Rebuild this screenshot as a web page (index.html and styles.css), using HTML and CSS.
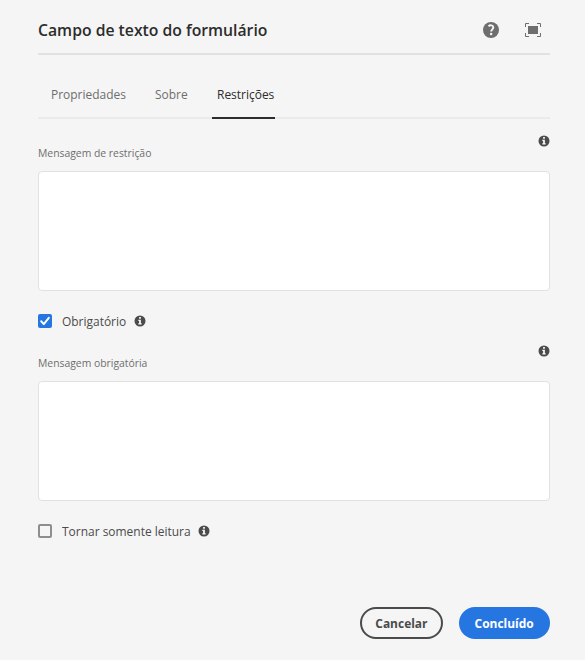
FILE: index.html
```html
<!DOCTYPE html>
<html lang="pt-BR">
<head>
<meta charset="utf-8">
<title>Campo de texto do formulário</title>
<link rel="stylesheet" href="styles.css">
</head>
<body>
<svg class="defs" width="0" height="0" aria-hidden="true">
  <symbol id="info" viewBox="0 0 12 12">
    <circle cx="6" cy="6" r="5.5" fill="#4b4b4b"/>
    <path d="M5.1 2.1h1.8v1.6H5.1zM4.3 4.8h2.6v3.5h.8v1.1H4.3V8.3h.8V5.9h-.8z" fill="#f5f5f5"/>
  </symbol>
</svg>
<main class="dialog">
  <header class="header">
    <h1 class="title"><span class="narrow">Campo de texto do formulário</span></h1>
    <div class="actions">
      <svg width="16" height="16" viewBox="0 0 16 16"><circle cx="8" cy="8" r="8" fill="#6e6e6e"/><path d="M5.5 4.2C7.2 2.7 10.3 3.1 10.3 5.4c0 1.9-2.1 2-2.1 4.1" fill="none" stroke="#f5f5f5" stroke-width="2"/><circle cx="8.1" cy="12.1" r="1.25" fill="#f5f5f5"/></svg>
      <svg width="16" height="14" viewBox="0 0 16 14"><path d="M3 3h10v8H3z" fill="#6e6e6e"/><path d="M.5 4V.5H4M12 .5h3.5V4M15.5 10v3.5H12M4 13.5H.5V10" fill="none" stroke="#6e6e6e"/></svg>
    </div>
  </header>
  <nav class="tabs">
    <a class="tab tab-props"><span class="narrow">Propriedades</span></a>
    <a class="tab tab-about"><span class="narrow">Sobre</span></a>
    <a class="tab tab-active"><span class="narrow">Restrições</span></a>
  </nav>
  <section class="field">
    <div class="field-head"><label for="m1"><span class="narrow">Mensagem de restrição</span></label><svg class="info"><use href="#info"/></svg></div>
    <textarea id="m1" class="box"></textarea>
  </section>
  <div class="check">
    <span class="tick checked"><svg width="14" height="14" viewBox="0 0 14 14"><path d="M3.2 7.3l2.6 2.8 5-6.2" fill="none" stroke="#fff" stroke-width="2" stroke-linecap="round" stroke-linejoin="round"/></svg></span>
    <span class="check-text required"><span class="narrow">Obrigatório</span></span><svg class="info"><use href="#info"/></svg>
  </div>
  <section class="field">
    <div class="field-head"><label for="m2"><span class="narrow">Mensagem obrigatória</span></label><svg class="info"><use href="#info"/></svg></div>
    <textarea id="m2" class="box"></textarea>
  </section>
  <div class="check">
    <span class="tick"></span>
    <span class="check-text readonly"><span class="narrow">Tornar somente leitura</span></span><svg class="info"><use href="#info"/></svg>
  </div>
  <footer class="footer">
    <button class="btn cancel"><span class="narrow">Cancelar</span></button>
    <button class="btn done"><span class="narrow">Concluído</span></button>
  </footer>
</main>
</body>
</html>
```
FILE: styles.css
```css
* { box-sizing: border-box; }
body {
  margin: 0;
  background: #f5f5f5;
  color: #4b4b4b;
  font-family: "Open Sans", "Noto Sans", sans-serif;
  overflow: hidden;
}
.defs { display: none; }
.narrow { display: inline-block; transform: scaleX(.92); transform-origin: left center; }
.dialog {
  height: 660px;
  padding: 0 35px 21px 38px;
  display: flex;
  flex-direction: column;
}
.header {
  height: 55px;
  padding-top: 7px;
  border-bottom: 2px solid #e1e1e1;
  display: flex;
  align-items: center;
  justify-content: space-between;
}
.title {
  margin: 0;
  font-size: 17px;
  line-height: 24px;
  font-weight: 600;
  color: #2c2c2c;
  white-space: nowrap;
}
.title .narrow { transform: scaleX(.926); }
.actions { display: flex; align-items: center; gap: 26px; margin-right: 9px; }
.tabs {
  height: 64px;
  padding-left: 13px;
  border-bottom: 2px solid #eaeaea;
  display: flex;
  font-size: 13px;
  line-height: 18px;
  color: #6e6e6e;
  white-space: nowrap;
}
.tab { height: 64px; padding-top: 30px; }
.tab-props { width: 104px; }
.tab-about { width: 57px; }
.tab-active { width: 63px; padding-left: 5px; color: #2c2c2c; border-bottom: 2px solid #2c2c2c; }
.field { height: 172px; padding-top: 16px; }
.field-head { height: 36px; display: flex; justify-content: space-between; }
.field-head label { padding-top: 10px; font-size: 11px; line-height: 16px; color: #6e6e6e; white-space: nowrap; }
.field-head .narrow { transform: scaleX(.943); }
.info { width: 12px; height: 12px; flex: none; }
.box {
  display: block;
  width: 100%;
  height: 120px;
  border: 1px solid #e1e1e1;
  border-radius: 4px;
  background: #fff;
  resize: none;
}
.check { height: 38px; padding-top: 22px; display: flex; align-items: center; }
.check-text { margin: 0 8px 0 10px; font-size: 13px; line-height: 18px; white-space: nowrap; }
.tick { width: 14px; height: 14px; border: 2px solid #8e8e8e; border-radius: 2px; display: block; flex: none; }
.checked { border: 0; background: #2676e2; }
.checked svg { display: block; }
.required { width: 64px; }
.readonly { width: 128px; }
.footer { margin-top: auto; display: flex; justify-content: flex-end; gap: 16px; }
.btn {
  height: 32px;
  padding: 0 0 1px;
  border-radius: 16px;
  font: inherit;
  font-size: 13px;
  font-weight: 700;
  white-space: nowrap;
}
.btn .narrow { transform-origin: center; }
.cancel { width: 83px; border: 2px solid #4b4b4b; background: transparent; color: #4b4b4b; }
.done { width: 91px; border: 0; background: #2676e2; color: #fff; }
```
